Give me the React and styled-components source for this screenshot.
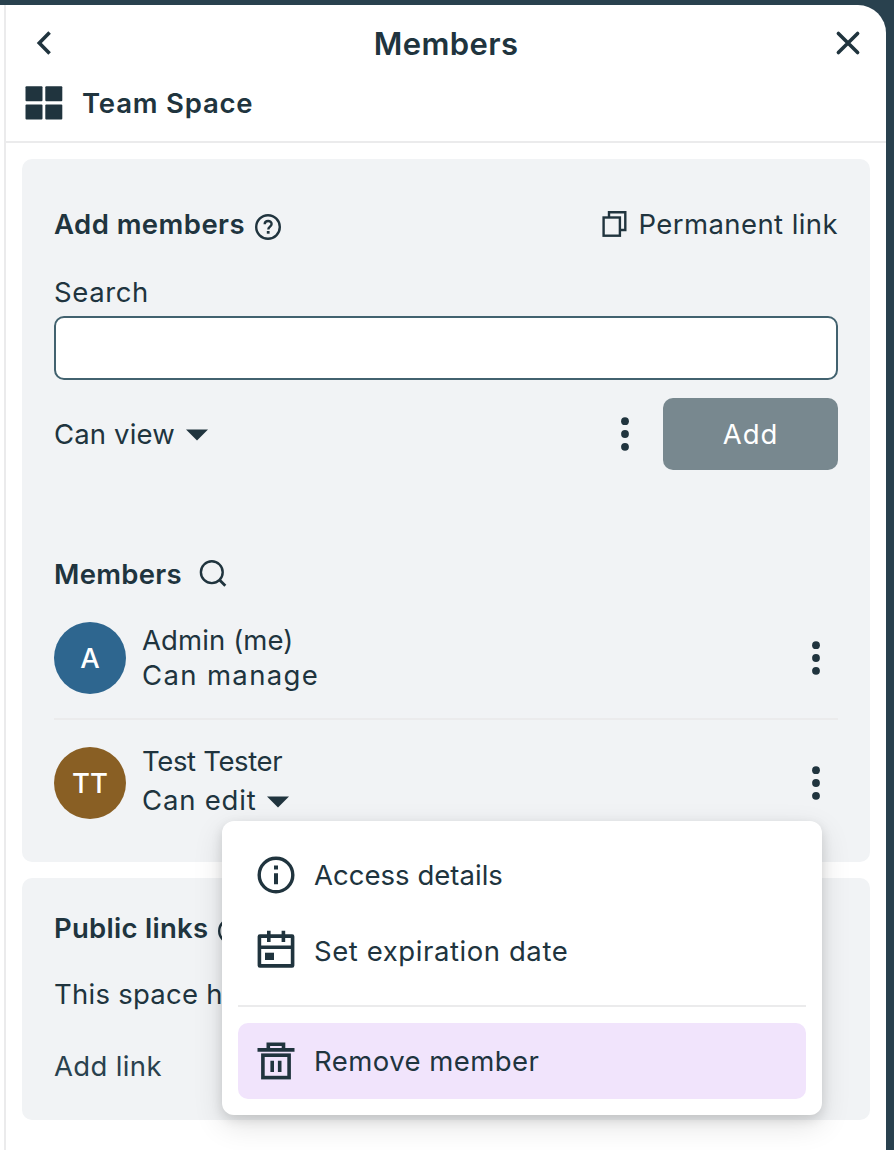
import React from "react";
import styled, { createGlobalStyle } from "styled-components";

const INK = "#20343e";
const LINE = "#ebebec";

const Global = createGlobalStyle`
  * { box-sizing: border-box; }
  html, body, #root { height: 100%; }
  body {
    margin: 0;
    overflow: hidden;
    background: #29414e;
    color: ${INK};
    font-family: Inter, Lato, sans-serif;
    font-size: 27.5px;
    line-height: 36px;
  }
`;

const Page = styled.div`
  position: relative;
  height: 1150px;
  width: 894px;
  padding: 5px 8px 0 0;
`;

const Sidebar = styled.aside`
  height: 100%;
  background: #fff;
  border-top-right-radius: 28px;
  padding-left: 4px;
`;

const Inner = styled.div`
  height: 100%;
  border-left: 2px solid ${LINE};
`;

const Header = styled.header`
  height: 138px;
  border-bottom: 2px solid ${LINE};
`;

const TitleBar = styled.div`
  display: flex;
  align-items: center;
  justify-content: space-between;
  height: 76px;
  padding: 0 22px;
`;

const Title = styled.h1`
  margin: 2px 0 0;
  font-size: 31px;
  font-weight: 600;
  letter-spacing: 0.4px;
`;

const IconButton = styled.button`
  display: flex;
  padding: 0;
  border: 0;
  background: none;
  color: inherit;
`;

const SpaceRow = styled.div`
  display: flex;
  align-items: center;
  gap: 19px;
  height: 44px;
  padding-left: 19px;
`;

const Label = styled.span`
  white-space: nowrap;
  font-weight: ${(p) => (p.$bold ? 600 : 400)};
  letter-spacing: ${(p) => p.$track || 0}px;
`;

const Cards = styled.main`
  display: flex;
  flex-direction: column;
  gap: 16px;
  padding: 16px;
`;

const Card = styled.section`
  height: ${(p) => p.$height}px;
  padding: ${(p) => p.$top}px 32px 0;
  border-radius: 10px;
  background: #f1f3f5;
`;

const Spread = styled.div`
  display: flex;
  align-items: center;
  justify-content: space-between;
`;

const Cluster = styled.div`
  display: flex;
  align-items: center;
  gap: ${(p) => p.$gap}px;
`;

const FieldLabel = styled.label`
  display: block;
  margin-top: 32px;
`;

const Input = styled.input`
  display: block;
  width: 100%;
  height: 64px;
  margin-top: 6px;
  border: 2px solid #42626f;
  border-radius: 10px;
  background: #fff;
`;

const Controls = styled(Spread)`
  height: 72px;
  margin-top: 18px;
`;

const AddButton = styled.button`
  width: 175px;
  height: 72px;
  padding: 0;
  border: 0;
  border-radius: 10px;
  background: #78888f;
  color: #fff;
  font: inherit;
  letter-spacing: 0.9px;
`;

const ListHeading = styled(Cluster)`
  margin-top: 86px;
`;

const Member = styled.div`
  display: flex;
  align-items: center;
  height: 72px;
  gap: 16px;
  padding-right: 12px;
`;

const MemberList = styled.div`
  margin-top: 30px;
`;

const Divider = styled.hr`
  height: 2px;
  margin: ${(p) => p.$space};
  border: 0;
  background: ${LINE};
`;

const Avatar = styled.div`
  flex: none;
  width: 72px;
  height: 72px;
  border-radius: 50%;
  background: ${(p) => p.$color};
  color: #fff;
  text-align: center;
  line-height: 73px;
  font-weight: 500;
`;

const MemberText = styled.div`
  flex: 1;
  display: flex;
  flex-direction: column;
  gap: ${(p) => p.$gap}px;
  padding-bottom: ${(p) => p.$lift}px;
  line-height: 35px;
`;

const LinkInfo = styled.div`
  margin-top: 30px;
`;

const AddLink = styled.div`
  margin-top: 36px;
  color: #29414e;
`;

const Menu = styled.div`
  position: absolute;
  left: 222px;
  top: 821px;
  width: 600px;
  height: 294px;
  padding: 16px;
  border-radius: 12px;
  background: #fff;
  box-shadow: 0 10px 30px rgba(0, 0, 0, 0.12), 0 4px 12px rgba(0, 0, 0, 0.12);
`;

const MenuItem = styled.div`
  display: flex;
  align-items: center;
  gap: 18px;
  height: 76px;
  padding-left: 18px;
  border-radius: 10px;
  background: ${(p) => (p.$active ? "#f1e4fc" : "transparent")};

  svg {
    overflow: visible;
  }
`;

const Caret = () => (
  <svg width="22" height="14" viewBox="0 0 22 14">
    <path d="M0 2.5h22L11 13.5z" fill="currentColor" />
  </svg>
);

const Dots = () => (
  <svg width="20" height="36" viewBox="0 0 20 36" fill="currentColor">
    <circle cx="10" cy="5.2" r="3.9" />
    <circle cx="10" cy="18" r="3.9" />
    <circle cx="10" cy="30.8" r="3.9" />
  </svg>
);

const HelpIcon = styled.svg`
  margin-top: 6px;
`;

const Help = () => (
  <HelpIcon width="26" height="26" viewBox="0 0 26 26" fill="none" stroke="currentColor" strokeWidth="2.4">
    <circle cx="13" cy="13" r="11.8" />
    <path d="M9.7 10.3c0-4.4 6.9-4.4 6.9-.2 0 2.4-3.3 2.7-3.3 5.4" />
    <path d="M13.2 17v2.7" strokeWidth="2.8" />
  </HelpIcon>
);

export default function App() {
  return (
    <Page>
      <Global />
      <Sidebar>
        <Inner>
          <Header>
            <TitleBar>
              <IconButton aria-label="Back">
                <svg width="32" height="32" viewBox="0 0 32 32" fill="none" stroke="currentColor" strokeWidth="3.6">
                  <path d="M21.6 5.6L11.3 16l10.3 10.4" />
                </svg>
              </IconButton>
              <Title>Members</Title>
              <IconButton aria-label="Close">
                <svg width="32" height="32" viewBox="0 0 32 32" fill="none" stroke="currentColor" strokeWidth="3.6" strokeLinecap="round">
                  <path d="M6.4 6.4l19.2 19.2M25.6 6.4L6.4 25.6" />
                </svg>
              </IconButton>
            </TitleBar>
            <SpaceRow>
              <svg width="38" height="34" viewBox="0 0 38 34" fill="currentColor">
                <rect x=".5" y=".3" width="17" height="15" rx="1" />
                <rect x="20.3" y=".3" width="17" height="15" rx="1" />
                <rect x=".5" y="18.5" width="17" height="15" rx="1" />
                <rect x="20.3" y="18.5" width="17" height="15" rx="1" />
              </svg>
              <Label $bold $track={0.8}>Team Space</Label>
            </SpaceRow>
          </Header>
          <Cards>
            <Card $height={703} $top={47}>
              <Spread>
                <Cluster $gap={10}>
                  <Label $bold $track={0.45}>Add members</Label>
                  <Help />
                </Cluster>
                <Cluster $gap={11}>
                  <svg width="26" height="28" viewBox="0 0 26 28" fill="none" stroke="currentColor" strokeWidth="2.4">
                    <path d="M8 7V2.3h16.3V20H19" />
                    <rect x="2.6" y="7.5" width="16.3" height="18.2" />
                  </svg>
                  <Label $track={0.42}>Permanent link</Label>
                </Cluster>
              </Spread>
              <FieldLabel>
                <Label $track={0.6}>Search</Label>
              </FieldLabel>
              <Input />
              <Controls>
                <Cluster $gap={11}>
                  <Label $track={0.15}>Can view</Label>
                  <Caret />
                </Cluster>
                <Cluster $gap={28}>
                  <Dots />
                  <AddButton>Add</AddButton>
                </Cluster>
              </Controls>
              <ListHeading $gap={17.5}>
                <Label $bold $track={0.3}>Members</Label>
                <svg width="28" height="28" viewBox="0 0 28 28" fill="none" stroke="currentColor" strokeWidth="2.4">
                  <circle cx="12.8" cy="12.2" r="10.9" />
                  <path d="M20.3 19.7l6 6" strokeWidth="2.8" />
                </svg>
              </ListHeading>
              <MemberList>
                <Member>
                  <Avatar $color="#2e668f">A</Avatar>
                  <MemberText $gap={0} $lift={0}>
                    <Label $track={0.1}>Admin (me)</Label>
                    <Label $track={1.35}>Can manage</Label>
                  </MemberText>
                  <Dots />
                </Member>
                <Divider $space="24px 0 27px" />
                <Member>
                  <Avatar $color="#895f24">TT</Avatar>
                  <MemberText $gap={4} $lift={4}>
                    <Label $track={-0.35}>Test Tester</Label>
                    <Cluster $gap={10.5}>
                      <Label $track={0.8}>Can edit</Label>
                      <Caret />
                    </Cluster>
                  </MemberText>
                  <Dots />
                </Member>
              </MemberList>
            </Card>
            <Card $height={242} $top={32}>
              <Cluster $gap={10}>
                <Label $bold $track={0.27}>Public links</Label>
                <Help />
              </Cluster>
              <LinkInfo>
                <Label $track={0.25}>This space has no public links.</Label>
              </LinkInfo>
              <AddLink>
                <Label $track={0.35}>Add link</Label>
              </AddLink>
            </Card>
          </Cards>
        </Inner>
      </Sidebar>
      <Menu>
        <MenuItem>
          <svg width="40" height="40" viewBox="0 0 40 40" fill="none" stroke="currentColor" strokeWidth="3.4">
            <circle cx="20" cy="20" r="16.8" />
            <path d="M20 10.5v4M20 18.2v11" strokeWidth="4" />
          </svg>
          <Label $track={0.03}>Access details</Label>
        </MenuItem>
        <MenuItem>
          <svg width="40" height="40" viewBox="0 0 40 40" fill="none" stroke="currentColor" strokeWidth="3.6">
            <rect x="3.4" y="5.1" width="33.2" height="29.8" rx=".5" />
            <path d="M3.5 16.3h33M12.8 -.3v11.2M27.4 -.3v11.2" />
            <path d="M9 21.7h9v7.3H9z" fill="currentColor" stroke="none" />
          </svg>
          <Label $track={0.58}>Set expiration date</Label>
        </MenuItem>
        <Divider $space="16px 0" />
        <MenuItem $active>
          <svg width="40" height="40" viewBox="0 0 40 40" fill="none" stroke="currentColor" strokeWidth="3.6">
            <path d="M1.5 8.9h37M12.3 8V3.2h15.2V8" />
            <rect x="6.9" y="14.2" width="26.2" height="22.4" />
            <path d="M16.2 19.7v11.2M23.7 19.7v11.2" />
          </svg>
          <Label $track={0.45}>Remove member</Label>
        </MenuItem>
      </Menu>
    </Page>
  );
}
